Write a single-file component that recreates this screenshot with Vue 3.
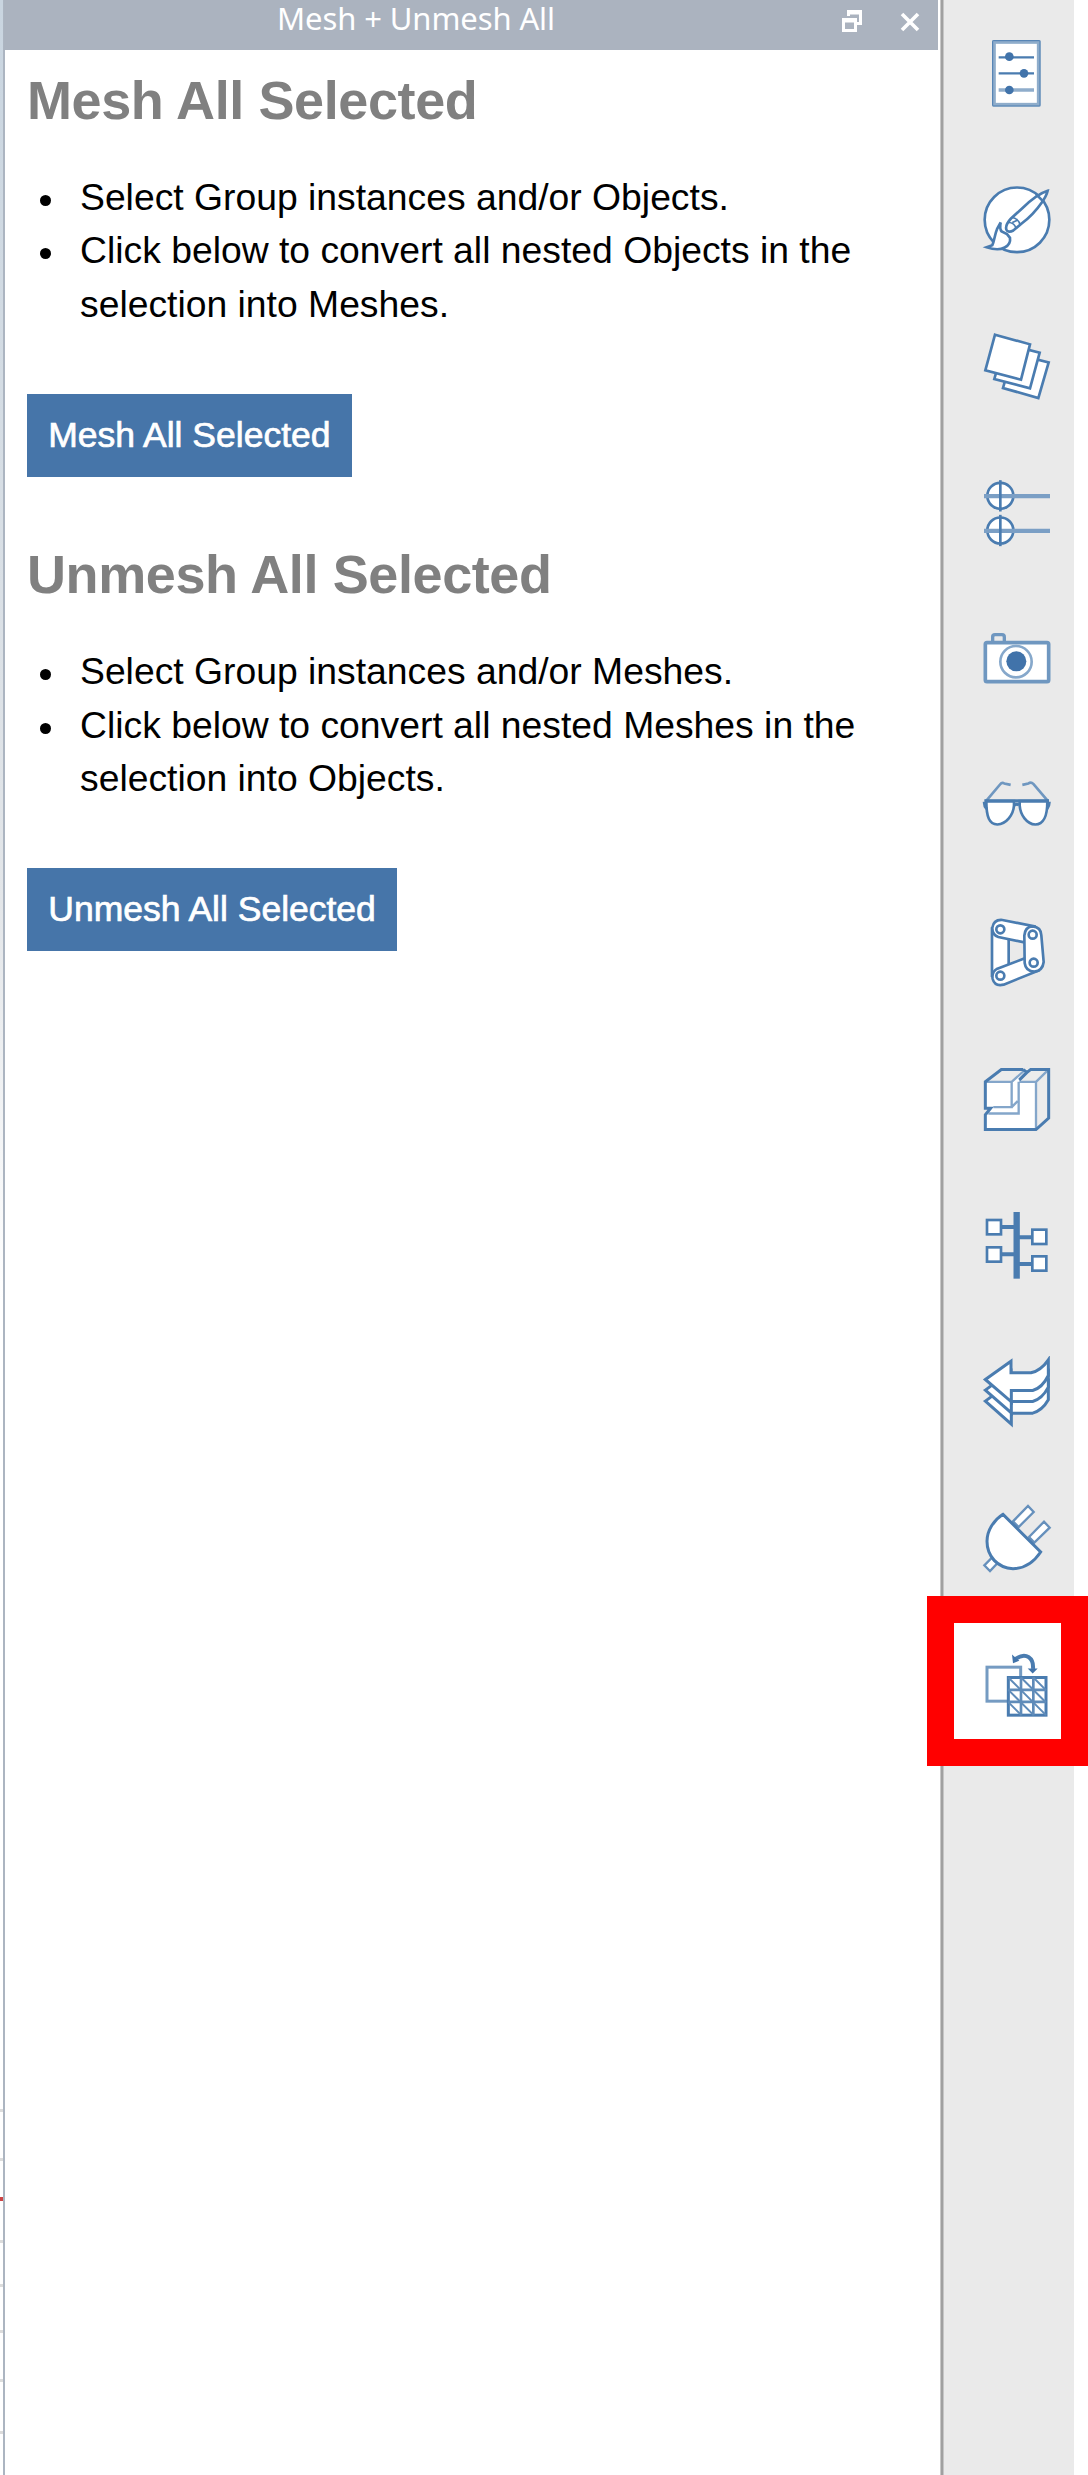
<script setup>
const sections = [
  {
    title: 'Mesh All Selected',
    steps: [
      'Select Group instances and/or Objects.',
      'Click below to convert all nested Objects in the selection into Meshes.',
    ],
  },
  {
    title: 'Unmesh All Selected',
    steps: [
      'Select Group instances and/or Meshes.',
      'Click below to convert all nested Meshes in the selection into Objects.',
    ],
  },
]
const ticks = [2110, 2159, 2241, 2285, 2331, 2380, 2432]
</script>

<template>
  <div class="app">
    <div class="canvas-edge">
      <i v-for="t in ticks" :key="t" class="tick" :style="{ top: t - 1 + 'px' }"></i>
      <i class="tick axis"></i>
    </div>
    <main class="panel">
      <header class="titlebar">
        <span class="name">Mesh + Unmesh All</span>
        <svg class="restore" viewBox="0 0 22 24" width="22" height="24">
          <path d="M7.5 7V2.5H19.500V14.500H15" fill="none" stroke="#fff" stroke-width="3" />
          <path d="M7 4H20" stroke="#fff" stroke-width="3" />
          <rect x="2.500" y="10.500" width="12" height="11" fill="none" stroke="#fff" stroke-width="3" />
          <path d="M1 11.500H16" stroke="#fff" stroke-width="4" />
        </svg>
        <svg class="close" viewBox="0 0 20 20" width="20" height="20">
          <path d="M2 2L18 18M18 2L2 18" stroke="#fff" stroke-width="3.600" />
        </svg>
      </header>
      <section v-for="s in sections" :key="s.title" class="block">
        <h2>{{ s.title }}</h2>
        <ul>
          <li v-for="step in s.steps" :key="step">{{ step }}</li>
        </ul>
        <button>{{ s.title }}</button>
      </section>
    </main>

    <nav class="rail">
      <!-- properties -->
      <svg class="icon" viewBox="150 51 216 216">
        <rect x="192" y="66" width="134" height="188" fill="#fff" stroke="#8fadcb" stroke-width="11" />
        <rect x="188" y="62" width="142" height="196" rx="2" fill="none" stroke-width="3" />
        <path d="M206 112H312M206 160H312" stroke-width="7" />
        <path d="M206 210H312" stroke="#8fadcb" stroke-width="10" />
        <g class="solid"><circle cx="238" cy="110" r="13" /><circle cx="282" cy="160" r="13" /><circle cx="238" cy="210" r="13" /></g>
      </svg>
      <!-- materials -->
      <svg class="icon" viewBox="150 490.5 216 216">
        <circle cx="261" cy="598" r="97" fill="#fff" />
        <path d="M353 511C330 518 296 545 277 563L243 594C232 606 226 617 229 627C232 635 241 635 250 630L275 609C296 593 318 571 336 545C346 531 351 520 353 511Z" fill="#fff" />
        <path d="M247 591C257 592 268 601 270 612M236 606C246 606 254 611 258 623M247 606L262 599" stroke-width="5" />
        <path d="M212 606L201 626C194 642 193 662 187 674L170 680C190 687 211 688 224 681C235 675 242 665 240 652L231 641L215 633Q208 625 212 606Z" fill="#fff" />
        <path d="M318 521L341 544" />
      </svg>
      <!-- layers -->
      <svg class="icon" viewBox="150 60 216 216">
        <path d="M249 130L356 157L325 264L219 234Z" fill="#fff" />
        <path d="M223 101L329 128L300 235L193 207Z" fill="#fff" />
        <path d="M195 74L300 103L273 209L166 181Z" fill="#fff" />
      </svg>
      <!-- levels -->
      <svg class="icon" viewBox="150 499.5 216 216">
        <g v-for="y in [557, 661]" :key="y">
          <circle cx="211" :cy="y - 1" r="39" fill="#fff" />
          <path :d="`M162 ${y}H360`" stroke="#7b9fc5" stroke-width="13" />
          <path :d="`M211 ${y - 48}V${y + 46}`" stroke-width="8" />
        </g>
      </svg>
      <!-- scenes -->
      <svg class="icon" viewBox="150 69 216 216">
        <path d="M188 128V110Q188 104 195 104H216Q223 104 223 111V128" stroke="#6f97c0" stroke-width="10" />
        <rect x="166" y="128" width="190" height="117" rx="5" fill="#fff" stroke="#6f97c0" stroke-width="11" />
        <circle cx="258" cy="185" r="47" stroke="#86a8cb" stroke-width="8" />
        <circle class="solid" cx="259" cy="184" r="30" />
      </svg>
      <!-- visual styles -->
      <svg class="icon" viewBox="150 508.500 216 216">
        <path d="M168 602L210 552Q216 544 223 549L242 553M354 602L310 550Q303 543 295 549L277 553" stroke="#6f97c0" />
        <path d="M169 602H252V615C250 643 229 671 202 672C178 671 169 650 169 602ZM352 602H269V615C271 643 290 671 316 672C341 671 352 650 352 602Z" fill="#fff" />
        <path d="M163 601H357" stroke-width="10" />
        <path d="M163 604Q162 616 170 625M358 604Q358 616 351 625M254 614Q261 609 267 614" stroke-width="9" />
      </svg>
      <!-- dynamo -->
      <svg class="icon" viewBox="150 78 216 216">
        <path d="M186 116V257H236V116Z" fill="#fff" />
        <path d="M217 90L314 109V157H283L205 141Q186 134 187 113Q191 88 217 90Z" fill="#fff" />
        <path d="M202 236L297 200L325 242L221 284Q194 290 188 267Q184 246 202 236Z" fill="#fff" />
        <path d="M283 137Q285 110 308 109Q333 111 334 136L341 216Q338 242 313 245Q287 244 284 219Z" fill="#fff" />
        <circle cx="211" cy="118" r="12" /><circle cx="308" cy="134" r="12" />
        <circle cx="211" cy="257" r="12" /><circle cx="311" cy="218" r="12" />
      </svg>
      <!-- section box -->
      <svg class="icon" viewBox="150 517.5 216 216">
        <path d="M166 574L214 537H356V683L318 717H166V672L184 655H166Z" fill="#fff" stroke="none" />
        <path d="M214 537L166 574H246L289 538ZM268 572L300 538H356L318 574V717L356 683V538L318 574Z" fill="#ececec" stroke="none" />
        <path d="M166 574H245V650H190M268 574H318M266 574V669H175M318 574V717M245 574L283 540M318 574L354 539M245 650L263 632M268 570L297 541" stroke="#84a6ca" stroke-width="7" />
        <path d="M279 537H214L166 574V653H182L166 673V717H318L356 683V537H302L291 545L279 537M291 545L268 568" stroke-width="9" />
      </svg>
      <!-- groups tree -->
      <svg class="icon" viewBox="150 57 216 216">
        <path d="M213 111H260M213 193H260M260 142H307M260 222H307" stroke-width="12" />
        <path d="M260 66V266" stroke-width="19" />
        <g fill="#fff" stroke-width="8">
          <rect x="171" y="90" width="42" height="43" /><rect x="171" y="172" width="42" height="43" />
          <rect x="307" y="119" width="42" height="43" /><rect x="307" y="199" width="42" height="43" />
        </g>
      </svg>
      <!-- history -->
      <svg class="icon" viewBox="150 496.5 216 216">
        <g fill="#fff" stroke-width="9">
          <path d="M166 632L243 575V610H305Q337 600 355 576V628Q337 660 308 668H244V701Z" />
          <path d="M166 599L243 542V580H305Q337 570 355 546V590Q337 625 308 633H244V667Z" />
          <path d="M166 567L243 512V547H303Q333 540 355 508V555Q337 592 308 600H244V634Z" />
        </g>
      </svg>
      <!-- plugins -->
      <svg class="icon" viewBox="195 66 216 216">
        <g fill="#fff" stroke="#6690bc" stroke-width="7">
          <path d="M294 124L339 78L356 96L311 141ZM342 171L387 125L404 143L358 188ZM208 256L230 234L247 250L225 273Z" />
        </g>
        <path d="M264 103L377 216C354 250 326 266 294 266C248 264 216 229 216 184C216 151 237 120 264 103Z" fill="#fff" stroke-width="9" />
      </svg>
      <!-- mesh + unmesh all -->
      <div class="active">
        <svg class="icon" viewBox="195 505.500 216 216">
          <rect x="216" y="560" width="101" height="102" fill="#fff" stroke="#759bc2" stroke-width="9" />
          <rect x="280" y="591" width="113" height="113" fill="#fff" stroke-width="9" />
          <path d="M318 591V704M355 591V704M280 628H393M280 664H393" stroke="#5f8bb9" stroke-width="8" />
          <path d="M280 591L393 704M318 591L393 666M355 591L393 629M280 628L356 704M280 665L319 704" stroke="#5f8bb9" stroke-width="6" />
          <path d="M302 535Q325 519 341 530Q356 540 354 565" stroke-width="12" />
          <path class="solid" d="M291 522L294 548L313 541ZM338 564H368L353 579Z" />
        </svg>
      </div>
    </nav>
  </div>
</template>

<style>
body {
  margin: 0;
  background: #fff;
}
</style>

<style scoped>
.app {
  display: flex;
  width: 1088px;
  height: 2475px;
  overflow: hidden;
  background: #fff;
  font-family: 'Liberation Sans', Arial, sans-serif;
}
.canvas-edge {
  position: relative;
  width: 3px;
  background: linear-gradient(#c9d5e0, #e3e6e9 900px, #fff 1300px);
}
.tick {
  position: absolute;
  left: 0;
  width: 3px;
  height: 3px;
  background: #dcdcdc;
}
.tick.axis {
  top: 2197px;
  height: 4px;
  background: #cc4444;
}
.panel {
  box-sizing: border-box;
  width: 935px;
  border-left: 2px solid #acb5c1;
}
.titlebar {
  display: flex;
  box-sizing: border-box;
  height: 50px;
  margin-left: -1px;
  padding-right: 18px;
  background: #abb3bf;
  color: #fff;
  font: 31px/36px 'Noto Sans', 'Open Sans', sans-serif;
  letter-spacing: -0.1px;
}
.name {
  width: 285px;
  height: 36px;
  margin-left: 273px;
  white-space: nowrap;
}
.restore {
  margin: 9px 0 0 279px;
}
.close {
  margin: 12px 0 0 auto;
}
.block {
  height: 474.3px;
  padding-left: 22px;
}
h2 {
  margin: 0;
  padding-top: 19px;
  color: #808080;
  font-size: 54px;
  line-height: 62px;
  letter-spacing: -0.4px;
}
ul {
  margin: 40px 0 0;
  padding: 0 60px 0 53px;
  font-size: 37.3px;
  line-height: 53.3px;
  color: #000;
  list-style: none;
}
li {
  position: relative;
}
li::before {
  content: '';
  position: absolute;
  left: -40.500px;
  top: 24px;
  width: 11px;
  height: 11px;
  border-radius: 50%;
  background: #000;
}
button {
  display: block;
  height: 83px;
  margin-top: 63px;
  padding: 0 21.300px;
  border: 0;
  background: #4675a9;
  color: #fff;
  font: 35.500px 'Liberation Sans', Arial, sans-serif;
  -webkit-text-stroke: 0.700px #fff;
}
.rail {
  display: flex;
  flex-direction: column;
  align-items: flex-start;
  gap: 74.5px;
  box-sizing: border-box;
  width: 134px;
  margin-left: 2px;
  padding: 37px 0 0 36px;
  border-left: 4px solid #a3a3a3;
  border-image: linear-gradient(to right, #c8c8c8 1px, #a0a0a0 1px, #a0a0a0 3px, #c6c6c6 3px) 0 0 0 4;
  background: #eaeaea;
}
.icon {
  display: block;
  flex: none;
  width: 72px;
  height: 72px;
  fill: none;
  stroke: #4a7cb0;
  stroke-width: 8;
}
.solid {
  fill: #4173aa;
  stroke: none;
}
.active {
  position: relative;
}
.active::before {
  content: '';
  position: absolute;
  box-sizing: border-box;
  left: -53px;
  top: -52.5px;
  width: 161px;
  height: 170px;
  border: 27px solid #f00;
  background: #fff;
}
.active .icon {
  position: relative;
}
</style>
